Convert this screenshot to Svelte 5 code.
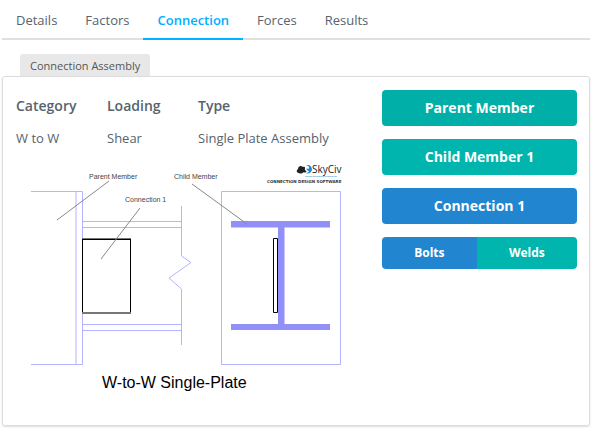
<script lang="ts">
  const tabs = ["Details", "Factors", "Connection", "Forces", "Results"];
  let activeTab = $state("Connection");

  const members = ["Parent Member", "Child Member 1", "Connection 1"];
  let activeMember = $state("Connection 1");

  const parts = ["Bolts", "Welds"];
  let activePart = $state("Bolts");
</script>

<div class="page">
  <nav class="tabs">
    {#each tabs as tab}
      <button class="tab" class:active={activeTab === tab} onclick={() => (activeTab = tab)}>
        {tab}
      </button>
    {/each}
  </nav>

  <h2 class="label">Connection Assembly</h2>

  <section class="card">
    <div class="assembly">
      <table>
        <thead>
          <tr>
            <th>Category</th>
            <th>Loading</th>
            <th class="wide">Type</th>
          </tr>
        </thead>
        <tbody>
          <tr>
            <td>W to W</td>
            <td>Shear</td>
            <td>Single Plate Assembly</td>
          </tr>
        </tbody>
      </table>

      <svg class="diagram" width="350" height="240" viewBox="0 0 350 240">
        <!-- parent member -->
        <g class="outline">
          <path d="M15 31.5H66.5V204.5H15M60 31.5V204.5" />
          <path d="M66 61.5H165.5M66 67.5H165.5M66 164.5H165.5V170.5H66" />
          <path d="M165.5 46V96L175 102.5L153 118L165.5 129V185" />
          <path d="M205.5 31.5H324.5V204.5H205.5Z" />
        </g>

        <!-- plate, side view -->
        <path class="plate" d="M66.5 153V79.5H114.5V153" />
        <path class="shade" d="M66 153H115M66 79H115" />
        <path class="plate" d="M66 79.5H115" />

        <!-- child member section -->
        <path class="section" d="M215 61H314V67.5H268.5V164H314V170H215V164H262V67.5H215Z" />
        <path class="plate" d="M257.5 78.5H261.5V152.5H257.5Z" />

        <!-- leader lines -->
        <path class="leader" d="M93 21L41 60M124 48L85 99M176 24L231 64" />

        <text class="note" x="73" y="19">Parent Member</text>
        <text class="note" x="158" y="19">Child Member</text>
        <text class="note" x="109" y="42">Connection 1</text>
        <text class="title" x="86" y="228">W-to-W Single-Plate</text>

        <!-- logo -->
        <path
          class="cloud"
          d="M281.500 12.500C280.300 11.500 280.500 9.500 282 9.200C282 6.200 285.300 5 286.800 7C288.300 6.200 289.300 7 289 8.200C288.500 9.500 289 10.500 290.500 11C290 12.500 288.500 12.800 287.500 12.200C286 14 283.500 13.800 281.500 12.500Z"
        />
        <path
          class="swirl"
          d="M290 5.300C293.500 4.300 296 6.500 296 9.500C296 12.500 292.500 14.300 289.500 13C292 12.700 293.300 12 292.800 11C291.500 10.800 290.300 9.700 290.500 8.300C291.800 9.300 293.300 8.800 293.100 7.500C292.800 6.200 291.500 5.600 290 5.300Z"
        />
        <text class="brand" x="296" y="13">SkyCiv</text>
        <text class="tagline" x="289" y="17">CLOUD ENGINEERING SOFTWARE</text>
        <text class="product" x="251" y="23">CONNECTION DESIGN SOFTWARE</text>
      </svg>
    </div>

    <div class="members">
      {#each members as member}
        <button
          class="member"
          class:active={activeMember === member}
          onclick={() => (activeMember = member)}
        >
          {member}
        </button>
      {/each}
      <div class="parts">
        {#each parts as part}
          <button
            class="part"
            class:active={activePart === part}
            onclick={() => (activePart = part)}
          >
            {part}
          </button>
        {/each}
      </div>
    </div>
  </section>
</div>

<style>
  :global(body) {
    background: #fff;
  }

  .page {
    padding: 0 6px 2px 2px;
    font-family: "Open Sans", sans-serif;
    font-size: 13px;
    color: #56636e;
  }

  button {
    font: inherit;
    border: none;
    cursor: pointer;
  }

  .tabs {
    display: flex;
    height: 38px;
    border-bottom: 2px solid #dfdfdf;
  }

  .tab {
    height: 40px;
    padding: 2px 14px 0;
    background: none;
    color: inherit;
    border-bottom: 2px solid transparent;
  }

  .tab.active {
    color: #00aeff;
    font-weight: 600;
    border-bottom-color: #00b4ff;
  }

  .label {
    width: fit-content;
    margin: 14px 0 0 18px;
    padding: 1px 10px 0;
    border-radius: 3px 3px 0 0;
    background: #e8e8e8;
    color: #555;
    font-size: 11px;
    font-weight: 400;
    line-height: 21px;
  }

  .card {
    display: grid;
    grid-template-columns: minmax(0, 1fr) minmax(0, 195px);
    gap: 16px;
    padding: 13px 12px 25px 13px;
    border: 1px solid #dcdcdc;
    border-radius: 3px;
    box-shadow: 0 1px 2px #ddd;
  }

  table {
    width: 100%;
    table-layout: fixed;
    border-collapse: collapse;
    text-align: left;
  }

  th,
  td {
    height: 32px;
    padding: 0;
    white-space: nowrap;
  }

  th {
    padding-bottom: 1px;
    height: 31px;
    font-size: 14px;
    font-weight: 600;
  }

  .wide {
    width: 48%;
  }

  .diagram {
    display: block;
    max-width: 100%;
    margin-top: 6px;
  }

  .outline {
    fill: none;
    stroke: #b4b4ff;
  }

  .plate {
    fill: none;
    stroke: #000;
  }

  .shade {
    stroke: #777;
    stroke-width: 2px;
  }

  .section {
    fill: #9090f8;
  }

  .leader {
    stroke: #888;
  }

  .note,
  .title {
    font-family: "Liberation Sans", Arial, sans-serif;
  }

  .note {
    font-size: 7px;
    fill: #444;
  }

  .title {
    font-size: 16px;
    fill: #000;
  }

  .cloud {
    fill: #222;
  }

  .swirl {
    fill: #2488cc;
  }

  .brand {
    font-size: 10px;
    fill: #222;
  }

  .tagline {
    font-size: 2px;
    font-weight: 600;
    fill: #2488cc;
  }

  .product {
    font-family: "DejaVu Sans", sans-serif;
    font-size: 4px;
    font-weight: 700;
    fill: #333;
  }

  .members {
    display: flex;
    flex-direction: column;
    gap: 13px;
  }

  .member,
  .part {
    padding: 0 0 2px;
    color: #fff;
    font-weight: 700;
    background: #00b5ad;
  }

  .member {
    height: 36px;
    border-radius: 4px;
    font-size: 14px;
  }

  .member:first-child {
    background: #00b0a8;
  }

  .parts {
    display: flex;
    border-radius: 4px;
    overflow: hidden;
  }

  .part {
    flex: 1 1 auto;
    height: 32px;
    font-size: 12px;
  }

  .member.active,
  .part.active {
    background: #2185d0;
  }
</style>
